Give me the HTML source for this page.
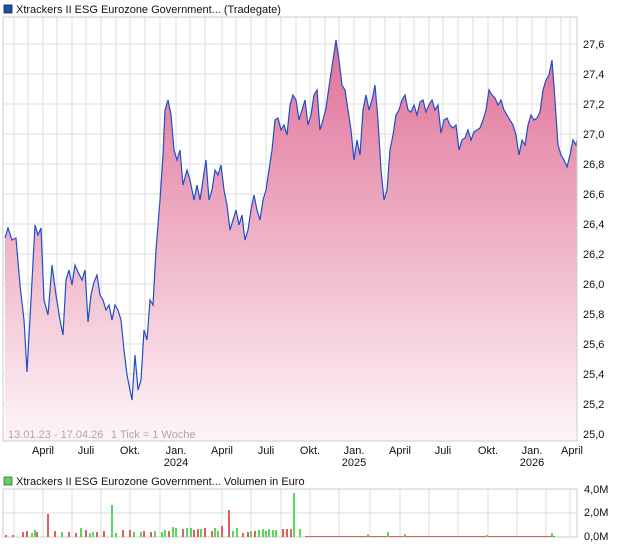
<!DOCTYPE html><html><head><style>body{margin:0;background:#fff;width:620px;height:546px;overflow:hidden;font-family:"Liberation Sans",sans-serif}</style></head><body>
<svg width="620" height="546" xmlns="http://www.w3.org/2000/svg" font-family="Liberation Sans, sans-serif" font-size="11">
<defs><linearGradient id="g" x1="0" y1="40" x2="0" y2="434" gradientUnits="userSpaceOnUse"><stop offset="0" stop-color="#e07098"/><stop offset="1" stop-color="#fdf3f6"/></linearGradient></defs>
<rect x="4" y="5" width="8" height="8" fill="#1f4fb5" stroke="#123" stroke-width="0.8"/>
<text x="16" y="13" fill="#111">Xtrackers II ESG Eurozone Government... (Tradegate)</text>
<g stroke="#dcdcdc" stroke-width="1">
<line x1="14" y1="17" x2="14" y2="441"/><line x1="28" y1="17" x2="28" y2="441"/><line x1="43" y1="17" x2="43" y2="441"/><line x1="57" y1="17" x2="57" y2="441"/><line x1="72" y1="17" x2="72" y2="441"/><line x1="86" y1="17" x2="86" y2="441"/><line x1="101" y1="17" x2="101" y2="441"/><line x1="116" y1="17" x2="116" y2="441"/><line x1="130" y1="17" x2="130" y2="441"/><line x1="145" y1="17" x2="145" y2="441"/><line x1="160" y1="17" x2="160" y2="441"/><line x1="176" y1="17" x2="176" y2="441"/><line x1="190" y1="17" x2="190" y2="441"/><line x1="205" y1="17" x2="205" y2="441"/><line x1="222" y1="17" x2="222" y2="441"/><line x1="236" y1="17" x2="236" y2="441"/><line x1="251" y1="17" x2="251" y2="441"/><line x1="266" y1="17" x2="266" y2="441"/><line x1="281" y1="17" x2="281" y2="441"/><line x1="296" y1="17" x2="296" y2="441"/><line x1="310" y1="17" x2="310" y2="441"/><line x1="325" y1="17" x2="325" y2="441"/><line x1="339" y1="17" x2="339" y2="441"/><line x1="354" y1="17" x2="354" y2="441"/><line x1="370" y1="17" x2="370" y2="441"/><line x1="385" y1="17" x2="385" y2="441"/><line x1="400" y1="17" x2="400" y2="441"/><line x1="414" y1="17" x2="414" y2="441"/><line x1="429" y1="17" x2="429" y2="441"/><line x1="443" y1="17" x2="443" y2="441"/><line x1="458" y1="17" x2="458" y2="441"/><line x1="473" y1="17" x2="473" y2="441"/><line x1="488" y1="17" x2="488" y2="441"/><line x1="503" y1="17" x2="503" y2="441"/><line x1="517" y1="17" x2="517" y2="441"/><line x1="532" y1="17" x2="532" y2="441"/><line x1="546" y1="17" x2="546" y2="441"/><line x1="561" y1="17" x2="561" y2="441"/><line x1="570" y1="17" x2="570" y2="441"/>
<line x1="3" y1="44" x2="577" y2="44"/><line x1="3" y1="74" x2="577" y2="74"/><line x1="3" y1="104" x2="577" y2="104"/><line x1="3" y1="134" x2="577" y2="134"/><line x1="3" y1="164" x2="577" y2="164"/><line x1="3" y1="194" x2="577" y2="194"/><line x1="3" y1="224" x2="577" y2="224"/><line x1="3" y1="254" x2="577" y2="254"/><line x1="3" y1="284" x2="577" y2="284"/><line x1="3" y1="314" x2="577" y2="314"/><line x1="3" y1="344" x2="577" y2="344"/><line x1="3" y1="374" x2="577" y2="374"/><line x1="3" y1="404" x2="577" y2="404"/><line x1="3" y1="434" x2="577" y2="434"/>
</g>
<path fill="url(#g)" stroke="none" d="M5,441 L5,238 8,228 12,240 16,238 20,285 24,320 27,372 31,300 35,225 38,235 41,228 44,300 48,315 52,265 56,295 60,320 63,335 66,280 69,270 72,285 75,265 78,272 82,280 85,270 88,322 91,295 94,282 97,275 100,295 103,300 106,310 109,305 112,320 115,305 118,310 121,320 124,350 127,375 130,390 132,400 135,355 138,390 141,380 144,330 147,340 150,300 153,305 156,250 160,200 163,155 165,110 168,100 171,115 174,150 177,160 180,150 183,185 187,170 190,180 194,200 197,185 200,200 203,180 206,160 209,200 212,190 215,170 218,175 221,165 224,190 227,205 230,230 233,220 236,210 239,225 242,215 245,240 248,230 251,210 254,195 257,210 260,220 263,200 266,190 269,170 272,150 275,120 278,118 281,130 284,125 287,135 290,105 293,95 296,100 299,120 302,110 305,100 308,125 311,115 314,95 317,90 320,130 323,120 326,108 330,80 333,60 336,40 339,60 342,85 345,90 348,110 351,130 354,160 357,140 360,155 363,110 366,95 369,110 372,100 375,85 378,120 381,170 384,200 387,190 390,150 393,135 396,115 399,110 402,100 405,95 408,110 411,112 414,105 417,115 420,102 423,100 426,112 429,105 432,100 435,110 438,105 441,133 444,120 447,118 450,125 453,128 456,125 459,150 462,140 465,138 468,130 471,140 474,132 477,130 480,128 483,120 486,110 489,90 492,95 495,98 498,105 501,100 504,110 507,115 510,120 513,125 516,135 519,155 522,140 525,145 528,125 531,115 534,120 537,118 540,112 543,90 546,80 549,75 552,60 555,100 558,145 561,155 564,160 567,167 570,155 573,140 576,145 577,140 L577,441 Z"/>
<polyline fill="none" stroke="#1e4fc8" stroke-width="1.2" points="5,238 8,228 12,240 16,238 20,285 24,320 27,372 31,300 35,225 38,235 41,228 44,300 48,315 52,265 56,295 60,320 63,335 66,280 69,270 72,285 75,265 78,272 82,280 85,270 88,322 91,295 94,282 97,275 100,295 103,300 106,310 109,305 112,320 115,305 118,310 121,320 124,350 127,375 130,390 132,400 135,355 138,390 141,380 144,330 147,340 150,300 153,305 156,250 160,200 163,155 165,110 168,100 171,115 174,150 177,160 180,150 183,185 187,170 190,180 194,200 197,185 200,200 203,180 206,160 209,200 212,190 215,170 218,175 221,165 224,190 227,205 230,230 233,220 236,210 239,225 242,215 245,240 248,230 251,210 254,195 257,210 260,220 263,200 266,190 269,170 272,150 275,120 278,118 281,130 284,125 287,135 290,105 293,95 296,100 299,120 302,110 305,100 308,125 311,115 314,95 317,90 320,130 323,120 326,108 330,80 333,60 336,40 339,60 342,85 345,90 348,110 351,130 354,160 357,140 360,155 363,110 366,95 369,110 372,100 375,85 378,120 381,170 384,200 387,190 390,150 393,135 396,115 399,110 402,100 405,95 408,110 411,112 414,105 417,115 420,102 423,100 426,112 429,105 432,100 435,110 438,105 441,133 444,120 447,118 450,125 453,128 456,125 459,150 462,140 465,138 468,130 471,140 474,132 477,130 480,128 483,120 486,110 489,90 492,95 495,98 498,105 501,100 504,110 507,115 510,120 513,125 516,135 519,155 522,140 525,145 528,125 531,115 534,120 537,118 540,112 543,90 546,80 549,75 552,60 555,100 558,145 561,155 564,160 567,167 570,155 573,140 576,145 577,140"/>
<rect x="3" y="17" width="574" height="424" fill="none" stroke="#ccc"/>
<text x="8" y="438" fill="#aaa">13.01.23 - 17.04.26</text><text x="111" y="438" fill="#aaa">1 Tick = 1 Woche</text>
<g fill="#111">
<text x="583" y="48">27,6</text><text x="583" y="78">27,4</text><text x="583" y="108">27,2</text><text x="583" y="138">27,0</text><text x="583" y="168">26,8</text><text x="583" y="198">26,6</text><text x="583" y="228">26,4</text><text x="583" y="258">26,2</text><text x="583" y="288">26,0</text><text x="583" y="318">25,8</text><text x="583" y="348">25,6</text><text x="583" y="378">25,4</text><text x="583" y="408">25,2</text><text x="583" y="438">25,0</text>
</g>
<g fill="#111" text-anchor="middle">
<text x="43" y="454">April</text><text x="86" y="454">Juli</text><text x="130" y="454">Okt.</text><text x="176" y="454">Jan.</text><text x="222" y="454">April</text><text x="266" y="454">Juli</text><text x="310" y="454">Okt.</text><text x="354" y="454">Jan.</text><text x="400" y="454">April</text><text x="443" y="454">Juli</text><text x="488" y="454">Okt.</text><text x="532" y="454">Jan.</text><text x="572" y="454">April</text>
<text x="176" y="466">2024</text><text x="354" y="466">2025</text><text x="532" y="466">2026</text>
</g>
<rect x="4" y="477" width="8" height="8" fill="#5ed65e" stroke="#333" stroke-width="0.6"/>
<text x="16" y="485" fill="#111">Xtrackers II ESG Eurozone Government... Volumen in Euro</text>
<g stroke="#dcdcdc"><line x1="3" y1="513" x2="577" y2="513"/>
<line x1="14" y1="489" x2="14" y2="537"/><line x1="43" y1="489" x2="43" y2="537"/><line x1="72" y1="489" x2="72" y2="537"/><line x1="101" y1="489" x2="101" y2="537"/><line x1="130" y1="489" x2="130" y2="537"/><line x1="160" y1="489" x2="160" y2="537"/><line x1="190" y1="489" x2="190" y2="537"/><line x1="222" y1="489" x2="222" y2="537"/><line x1="251" y1="489" x2="251" y2="537"/><line x1="281" y1="489" x2="281" y2="537"/><line x1="310" y1="489" x2="310" y2="537"/><line x1="339" y1="489" x2="339" y2="537"/><line x1="370" y1="489" x2="370" y2="537"/><line x1="400" y1="489" x2="400" y2="537"/><line x1="429" y1="489" x2="429" y2="537"/><line x1="458" y1="489" x2="458" y2="537"/><line x1="488" y1="489" x2="488" y2="537"/><line x1="517" y1="489" x2="517" y2="537"/><line x1="546" y1="489" x2="546" y2="537"/><line x1="570" y1="489" x2="570" y2="537"/></g>
<rect x="3" y="489" width="574" height="48" fill="none" stroke="#ccc"/>
<g fill="#e06060">
<rect x="5" y="535" width="2" height="2"/><rect x="12" y="535" width="2" height="2"/><rect x="22" y="532" width="2" height="5"/><rect x="26" y="531" width="2" height="6"/><rect x="36" y="532" width="2" height="5"/><rect x="47" y="514" width="2" height="23"/><rect x="54" y="531" width="2" height="6"/><rect x="68" y="532" width="2" height="5"/><rect x="75" y="533" width="2" height="4"/><rect x="85" y="530" width="2" height="7"/><rect x="96" y="532" width="2" height="5"/><rect x="103" y="531" width="2" height="6"/><rect x="122" y="530" width="2" height="7"/><rect x="129" y="530" width="2" height="7"/><rect x="143" y="531" width="2" height="6"/><rect x="150" y="532" width="2" height="5"/><rect x="168" y="531" width="2" height="6"/><rect x="182" y="529" width="2" height="8"/><rect x="193" y="530" width="2" height="7"/><rect x="197" y="529" width="2" height="8"/><rect x="204" y="528" width="2" height="9"/><rect x="211" y="531" width="2" height="6"/><rect x="221" y="526" width="2" height="11"/><rect x="228" y="510" width="2" height="27"/><rect x="242" y="533" width="2" height="4"/><rect x="247" y="532" width="2" height="5"/><rect x="254" y="531" width="2" height="6"/><rect x="282" y="529" width="2" height="8"/><rect x="286" y="529" width="2" height="8"/><rect x="290" y="529" width="2" height="8"/>
<rect x="305" y="536" width="250" height="1"/>
</g>
<g fill="#5ed65e">
<rect x="31" y="533" width="2" height="4"/><rect x="34" y="530" width="2" height="7"/><rect x="61" y="532" width="2" height="5"/><rect x="80" y="528" width="2" height="9"/><rect x="89" y="533" width="2" height="4"/><rect x="92" y="532" width="2" height="5"/><rect x="111" y="505" width="2" height="32"/><rect x="115" y="533" width="2" height="4"/><rect x="133" y="532" width="2" height="5"/><rect x="140" y="532" width="2" height="5"/><rect x="154" y="531" width="2" height="6"/><rect x="161" y="532" width="2" height="5"/><rect x="164" y="530" width="2" height="7"/><rect x="172" y="527" width="2" height="10"/><rect x="175" y="528" width="2" height="9"/><rect x="186" y="528" width="2" height="9"/><rect x="190" y="528" width="2" height="9"/><rect x="200" y="529" width="2" height="8"/><rect x="214" y="528" width="2" height="9"/><rect x="217" y="531" width="2" height="6"/><rect x="232" y="531" width="2" height="6"/><rect x="236" y="528" width="2" height="9"/><rect x="250" y="531" width="2" height="6"/><rect x="258" y="530" width="2" height="7"/><rect x="262" y="529" width="2" height="8"/><rect x="265" y="531" width="2" height="6"/><rect x="268" y="529" width="2" height="8"/><rect x="272" y="530" width="2" height="7"/><rect x="275" y="530" width="2" height="7"/><rect x="293" y="493" width="2" height="44"/><rect x="299" y="529" width="2" height="8"/><rect x="367" y="534" width="2" height="3"/><rect x="387" y="532" width="2" height="5"/><rect x="404" y="534" width="2" height="3"/><rect x="486" y="535" width="2" height="2"/><rect x="551" y="533" width="2" height="4"/>
</g>
<g fill="#111"><text x="584" y="493">4,0M</text><text x="584" y="516">2,0M</text><text x="584" y="540">0,0M</text></g>
</svg>
</body></html>
